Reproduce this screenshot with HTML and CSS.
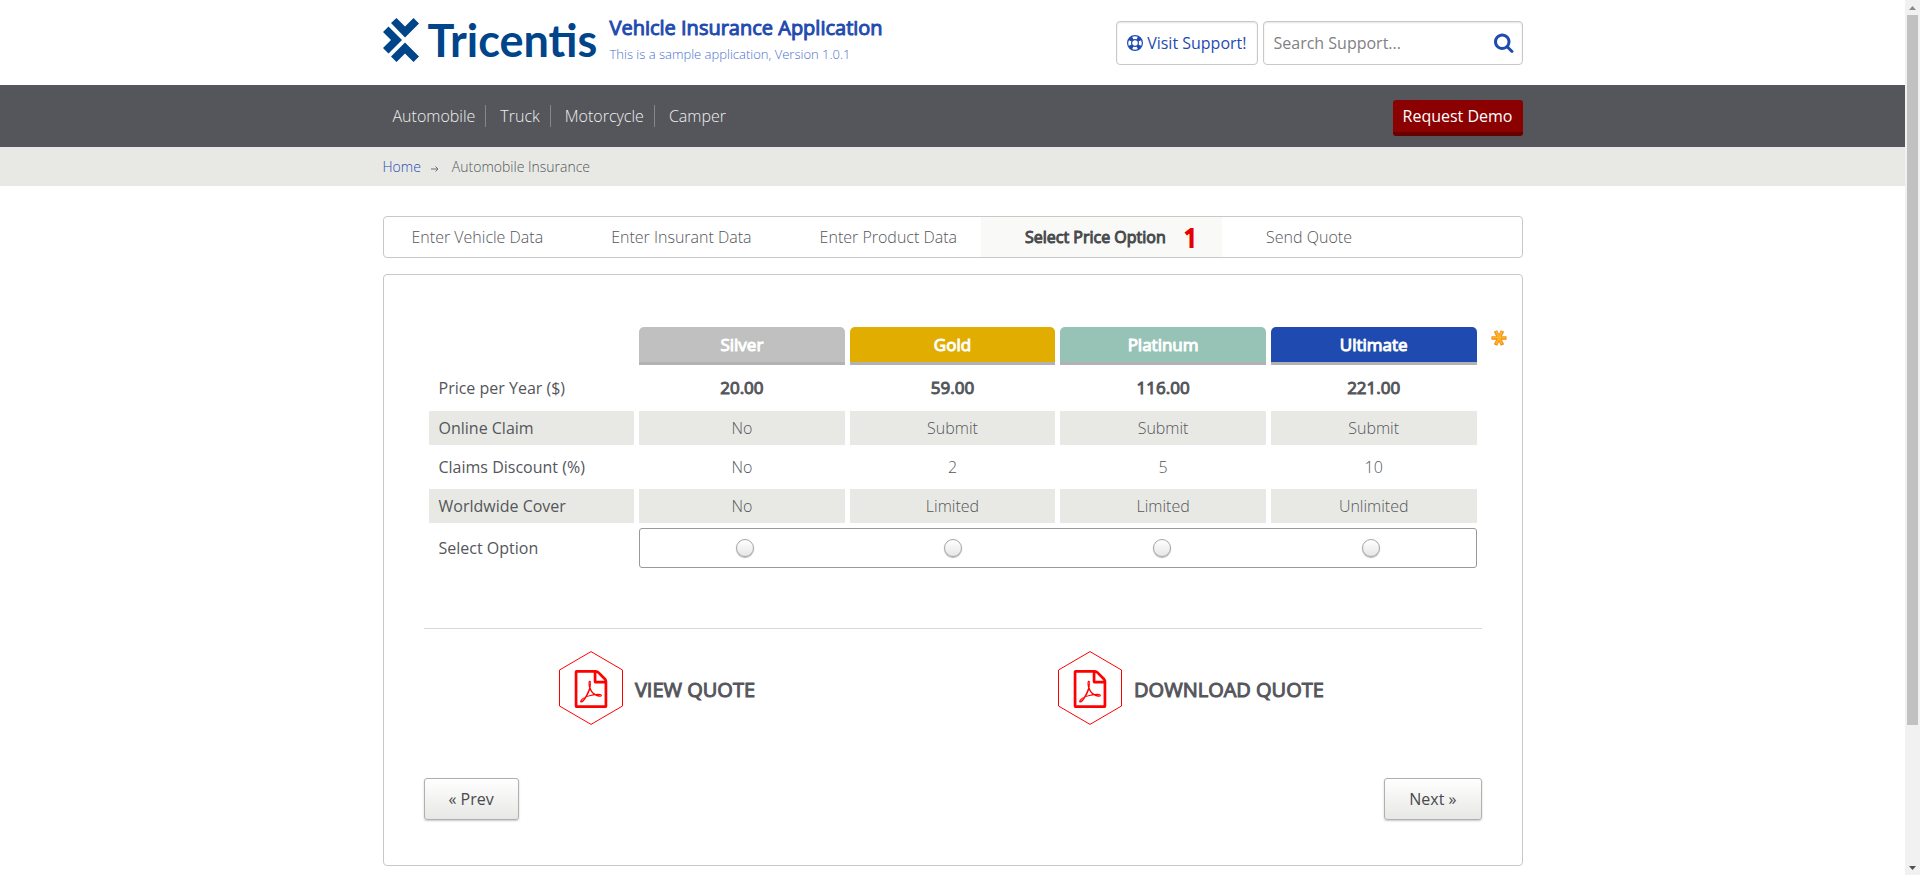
FILE: index.html
```html
<!DOCTYPE html>
<html lang="en">
<head>
<meta charset="utf-8">
<title>Select Price Option</title>
<link rel="stylesheet" href="styles.css">
</head>
<body>
<svg width="0" height="0" class="defs" aria-hidden="true">
  <symbol id="pdf" viewBox="0 0 64 74">
    <path d="M32 0.6 63.5 19V55L32 73.4 0.5 55V19Z" fill="none" stroke="red"/>
    <svg x="13" y="19" width="38" height="38" viewBox="0 0 1792 1792"><path fill="red" d="M1596 380q28 28 48 76t20 88v1152q0 40-28 68t-68 28h-1344q-40 0-68-28t-28-68v-1600q0-40 28-68t68-28h896q40 0 88 20t76 48zm-444-244v376h376q-10-29-22-41l-313-313q-12-12-41-22zm384 1528v-1024h-416q-40 0-68-28t-28-68v-416h-768v1536h1280zm-514-593q33 26 84 56 59-7 117-7 147 0 177 49 16 22 2 52 0 1-1 2l-2 2v1q-6 38-71 38-48 0-115-20t-130-53q-221 24-392 83-153 262-242 262-15 0-28-7l-24-12q-1-1-6-5-10-10-6-36 9-40 56-91.500t132-96.500q14-9 23 6 2 2 2 4 52-85 107-197 68-136 104-262-24-82-30.500-159.500t6.500-127.500q11-40 42-40h22q23 0 35 15 18 21 9 68-2 6-4 8 1 3 1 8v30q-2 123-14 192 55 164 146 238zm-576 411q52-24 137-158-51 40-87.500 84t-49.500 74zm398-920q-15 42-2 132 1-7 7-44 0-3 7-43 1-4 4-8-1-1-1-2t-1-2q-1-22-13-36 0 1-1 2v2zm-124 661q135-54 284-81-2-1-13-9.500t-16-13.500q-76-67-127-176-27 86-83 197-30 56-45 83zm646-16q-24-24-140-24 76 28 124 28 14 0 18-1 0-1-2-3z"/></svg>
  </symbol>
</svg>
<div class="window">
  <div class="page">
    <header class="wrap header">
      <a class="logo" href="#">
        <svg width="36" height="44" viewBox="0 0 36 44" fill="#00448a" aria-hidden="true">
          <path d="M8 5 13.500 0 22 8.500 30.500 0 36 5.500 22 19.500Z"/>
          <path d="M5.500 8.500 19 22 5.500 35.500 0 30 8 22 0 14Z"/>
          <path d="M22 24.500 36 38.500 30.500 44 22 35.500 13.500 44 8 38.500Z"/>
        </svg>
        <span class="logo-name">Tricentis</span>
      </a>
      <div class="titles">
        <h1 class="title">Vehicle Insurance Application</h1>
        <p class="subtitle">This is a sample application, Version 1.0.1</p>
      </div>
      <a class="support" href="#">
        <svg width="16" height="16" viewBox="0 0 16 16" fill="none" stroke="#1f4bb0" aria-hidden="true">
          <circle cx="8" cy="8" r="7.400" stroke-width="1.200"/>
          <circle cx="8" cy="8" r="3.400" stroke-width="1.200"/>
          <circle cx="8" cy="8" r="5.500" stroke-width="4" pathLength="8" stroke-dasharray="0.900 1.100" stroke-dashoffset="-0.550"/>
        </svg>
        Visit Support!</a>
      <form class="search">
        <input class="search-input" type="text" placeholder="Search Support..." aria-label="Search Support">
        <button class="search-button" type="button" aria-label="Search">
          <svg width="21" height="21" viewBox="0 0 1792 1792" fill="#1f4bb0"><path d="M1152 832q0-185-131.500-316.500t-316.500-131.500-316.500 131.500-131.500 316.500 131.500 316.500 316.500 131.500 316.500-131.500 131.500-316.500zm512 832q0 52-38 90t-90 38q-54 0-90-38l-343-342q-179 124-399 124-143 0-273.500-55.500t-225-150-150-225-55.500-273.500 55.500-273.500 150-225 225-150 273.500-55.500 273.500 55.500 225 150 150 225 55.500 273.500q0 220-124 399l343 343q37 37 37 90z"/></svg>
        </button>
      </form>
    </header>
    <div class="navbar">
      <div class="wrap navbar-row">
        <nav class="nav">
          <a class="nav-link" href="#">Automobile</a>
          <a class="nav-link" href="#">Truck</a>
          <a class="nav-link" href="#">Motorcycle</a>
          <a class="nav-link" href="#">Camper</a>
        </nav>
        <a class="demo" href="#">Request Demo</a>
      </div>
    </div>
    <div class="crumbs">
      <div class="wrap crumbs-row">
        <a class="crumb-home" href="#">Home</a>
        <svg class="crumb-arrow" width="8" height="6" viewBox="0 0 8 6" fill="none" stroke="#6e7274" aria-hidden="true"><path d="M0 3H7M4.500 0.500 7 3 4.500 5.500"/></svg>
        <span>Automobile Insurance</span>
      </div>
    </div>
    <main class="wrap main">
      <nav class="tabs">
        <a class="tab" href="#">Enter Vehicle Data</a>
        <a class="tab" href="#">Enter Insurant Data</a>
        <a class="tab" href="#">Enter Product Data</a>
        <a class="tab tab-active" href="#">Select Price Option <span class="count">1</span></a>
        <a class="tab" href="#">Send Quote</a>
      </nav>
      <form class="card">
        <div class="prices">
          <table class="table">
            <thead>
              <tr><td></td><th class="plan silver">Silver</th><th class="plan gold">Gold</th><th class="plan platinum">Platinum</th><th class="plan ultimate">Ultimate</th></tr>
            </thead>
            <tbody>
              <tr class="price"><th>Price per Year ($)</th><td>20.00</td><td>59.00</td><td>116.00</td><td>221.00</td></tr>
              <tr class="shaded"><th>Online Claim</th><td>No</td><td>Submit</td><td>Submit</td><td>Submit</td></tr>
              <tr><th>Claims Discount (%)</th><td>No</td><td>2</td><td>5</td><td>10</td></tr>
              <tr class="shaded"><th>Worldwide Cover</th><td>No</td><td>Limited</td><td>Limited</td><td>Unlimited</td></tr>
              <tr>
                <th>Select Option</th>
                <td class="options-cell" colspan="4">
                  <div class="options">
                    <input class="radio" type="radio" name="plan" aria-label="Silver">
                    <input class="radio" type="radio" name="plan" aria-label="Gold">
                    <input class="radio" type="radio" name="plan" aria-label="Platinum">
                    <input class="radio" type="radio" name="plan" aria-label="Ultimate">
                  </div>
                </td>
              </tr>
            </tbody>
          </table>
          <svg class="required" width="16" height="16" viewBox="0 0 16 16" fill="none" aria-label="required">
            <path d="M0.500 8H15.500M4.500 1 11.500 15M11.500 1 4.500 15" stroke="#f28a0c" stroke-width="3.600"/>
            <path d="M1.500 7.500H14.500M5 1.500 11 14M11 1.500 5 14" stroke="#fdb52e" stroke-width="1.800"/>
          </svg>
        </div>
        <div class="quotes">
          <a class="quote" href="#"><svg width="64" height="74" aria-hidden="true"><use href="#pdf"/></svg><span class="quote-label">VIEW QUOTE</span></a>
          <a class="quote" href="#"><svg width="64" height="74" aria-hidden="true"><use href="#pdf"/></svg><span class="quote-label">DOWNLOAD QUOTE</span></a>
        </div>
        <div class="actions">
          <button class="button" type="button">« Prev</button>
          <button class="button" type="button">Next »</button>
        </div>
      </form>
    </main>
  </div>
  <div class="scrollbar" aria-hidden="true">
    <svg width="15" height="15" fill="#8b8b8b"><path d="M4 10 7.500 6 11 10Z"/></svg>
    <div class="thumb"></div>
    <svg width="15" height="15" fill="#505050"><path d="M4 5 7.500 9 11 5Z"/></svg>
  </div>
</div>
</body>
</html>
```
FILE: styles.css
```css
* { box-sizing: border-box; }
body {
  margin: 0;
  background: #fff;
  color: #54565b;
  font: 300 16px/24px "Open Sans", "Noto Sans", sans-serif;
}
a { color: inherit; text-decoration: none; }
.defs { position: absolute; }
.window { display: grid; grid-template-columns: minmax(0, 1fr) 15px; min-height: 100vh; }
.wrap { width: 100%; max-width: 1140px; margin: 0 auto; }

.header { display: flex; align-items: center; height: 85px; }
.logo { display: flex; align-items: center; gap: 9px; width: 227px; padding-bottom: 5px; }
.logo-name { color: #00448a; font: 700 45px/44px Lato, sans-serif; }
.titles { flex: 1; padding-bottom: 5px; }
.title {
  margin: 0;
  color: #1f4bb0;
  font-size: 20px;
  font-weight: 400;
  line-height: 28px;
  -webkit-text-stroke: 1px;
}
.subtitle { margin: 0; color: #4a6fd0; font-size: 13px; line-height: 24px; }
.support, .search {
  display: flex;
  align-items: center;
  height: 44px;
  border: 1px solid #c8c8c8;
  border-radius: 4px;
  box-shadow: inset 0 1px 2px #e4e4e4;
}
.support { gap: 4px; margin-right: 5px; padding: 0 10px; color: #1f4bb0; font-weight: 400; }
.search { width: 260px; padding: 0 7px 0 10px; }
.search-input { flex: 1; min-width: 0; padding: 0; border: 0; outline: 0; background: none; color: #54565b; font: inherit; font-weight: 400; }
.search-input::placeholder { color: #7f8183; opacity: 1; }
.search-button { display: flex; padding: 0; border: 0; background: none; }

.navbar { background: #54565b; }
.navbar-row { display: flex; align-items: center; justify-content: space-between; height: 62px; }
.nav { display: flex; gap: 4px; }
.nav-link { padding: 0 10px; color: #f0f0f0; line-height: 22px; }
.nav-link:not(:last-child) { border-right: 1px solid #85878b; }
.demo {
  padding: 4px 10px;
  margin-top: 4px;
  border-bottom: 4px solid #690000;
  border-radius: 3px;
  background: #8b0000;
  color: #fff;
  font-weight: 400;
}
.crumbs { background: #e8e9e4; color: #54565b; font-size: 14px; }
.crumbs-row { display: flex; align-items: center; height: 39px; }
.crumb-home { color: #1f4bb0; }
.crumb-arrow { margin: 5px 13px 0 10px; }

.main { padding: 30px 0 10px; }
.tabs { display: flex; height: 42px; margin-bottom: 16px; border: 1px solid #c8c8c8; border-radius: 4px; }
.tab { display: flex; align-items: center; padding: 0 24px 0 44px; }
.tab:first-child { padding-left: 28px; }
.tab-active { background: #f9f9f7; color: #484a4d; font-weight: 400; -webkit-text-stroke: 1px; }
.count { margin-left: 18px; color: #e60000; font-size: 25px; -webkit-text-stroke: 2px; }

.card { padding: 47px 40px 45px; border: 1px solid #c8c8c8; border-radius: 4px; }
.prices { position: relative; padding-bottom: 55px; border-bottom: 1px solid #d8d8d8; }
.required { position: absolute; top: 8px; right: -25px; }
.table { width: 100%; table-layout: fixed; border-spacing: 5px; }
.table th, .table td { height: 34px; padding: 0; text-align: center; font-weight: 300; }
.table tbody th { padding-left: 10px; text-align: left; font-weight: 400; }
.table .plan, .table .price td { font-size: 17px; font-weight: 400; -webkit-text-stroke: 1px; }
.table .plan { height: 38px; border-bottom: 3px solid #b0b2b3; border-radius: 5px 5px 0 0; color: #fff; }
.silver { background: #c0c0c0; }
.gold { background: #e0ad00; }
.platinum { background: #96c3b6; }
.ultimate { background: #1f4bb0; }
.table .price th, .table .price td { height: 36px; }
.shaded th, .shaded td { background: #e8e9e4; }
.table .options-cell { height: 40px; }
.options { display: grid; grid-template-columns: repeat(4, 1fr); place-items: center; height: 40px; border: 1px solid #97999b; border-radius: 3px; }
.radio {
  appearance: none;
  width: 18px;
  height: 18px;
  margin: 0;
  border: 1px solid #a6a6a6;
  border-radius: 50%;
  background: linear-gradient(#fff, #e6e6e6);
  box-shadow: 0 1px 1px #b4b4b4;
}
.quotes { display: grid; grid-template-columns: 1fr 1fr; gap: 10px; padding: 22px 0 53px; }
.quote {
  display: flex;
  align-items: center;
  justify-content: center;
  gap: 12px;
  padding-right: 57px;
  font-size: 20px;
  font-weight: 400;
  -webkit-text-stroke: 1px;
}
.quote-label { padding-top: 4px; }
.actions { display: flex; justify-content: space-between; }
.button {
  height: 42px;
  padding: 0 24px;
  border: 1px solid #b0b0b0;
  border-radius: 3px;
  background: linear-gradient(#fff, #e7e7e5);
  box-shadow: 0 1px 2px #c8c8c8;
  color: #484a4d;
  font: inherit;
  font-weight: 400;
}

.scrollbar { display: flex; flex-direction: column; background: #f1f1f1; }
.scrollbar svg { flex: none; }
.thumb { flex: none; width: 11px; height: 81%; margin: 0 auto auto 2px; background: #c1c1c1; }
```
